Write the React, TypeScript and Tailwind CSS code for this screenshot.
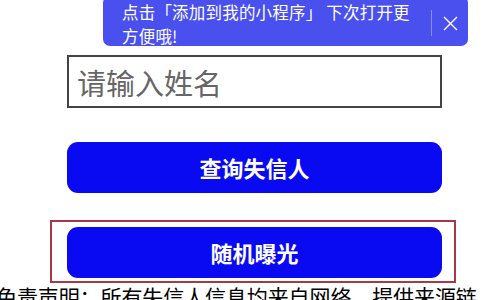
import React from "react";

const font = { fontFamily: '"Noto Sans CJK SC", "Noto Sans", sans-serif' };

export default function App() {
  return (
    <div className="relative w-[500px] h-[300px] overflow-hidden bg-white" style={font}>
      <div className="flex flex-col">
        <div className="ml-[103px] -mt-[4px] w-[365px] h-[50px] rounded-[7px] bg-[#4a50ee] flex items-center text-white">
          <div className="pl-[19px] pt-[5px] w-[312px] text-[16.5px] leading-[24px] tracking-[0.2px]">
            点击「添加到我的小程序」 下次打开更方便哦!
          </div>
          <div className="ml-[16px] mt-[4px] w-[1px] h-[26px] bg-[#8a8ff4]" />
          <div className="flex-1 flex justify-center mt-[4px]">
            <svg width="15" height="15" viewBox="0 0 15 15">
              <path d="M1 1 L14 14 M14 1 L1 14" stroke="white" strokeWidth="1.4" fill="none" />
            </svg>
          </div>
        </div>

        <div className="ml-[67px] mt-[9px] w-[375px] h-[53px] border-2 border-[#444] flex items-center">
          <input
            className="w-full h-full pl-[8px] text-[29px] text-[#555] placeholder:text-[#666] outline-none bg-transparent"
            placeholder="请输入姓名"
            style={font}
          />
        </div>

        <div className="ml-[67px] mt-[34px] w-[375px] h-[51px] rounded-[11px] bg-[#0a0af2] flex items-center justify-center text-white text-[22px] font-bold">
          查询失信人
        </div>

        <div className="ml-[50px] mt-[27px] w-[406px] h-[63px] border-2 border-[#a83848] flex pl-[15px] pt-[5px]">
          <div className="w-[375px] h-[51px] rounded-[11px] bg-[#0a0af2] flex items-center justify-center text-white text-[22px] font-bold">
            随机曝光
          </div>
        </div>

        <div className="-ml-[4px] mt-[1px] w-[490px] text-[21px] leading-[24px] text-black tracking-[-0.1px]">
          免责声明：所有失信人信息均来自网络，提供来源链接仅供参考。
        </div>
      </div>
    </div>
  );
}
